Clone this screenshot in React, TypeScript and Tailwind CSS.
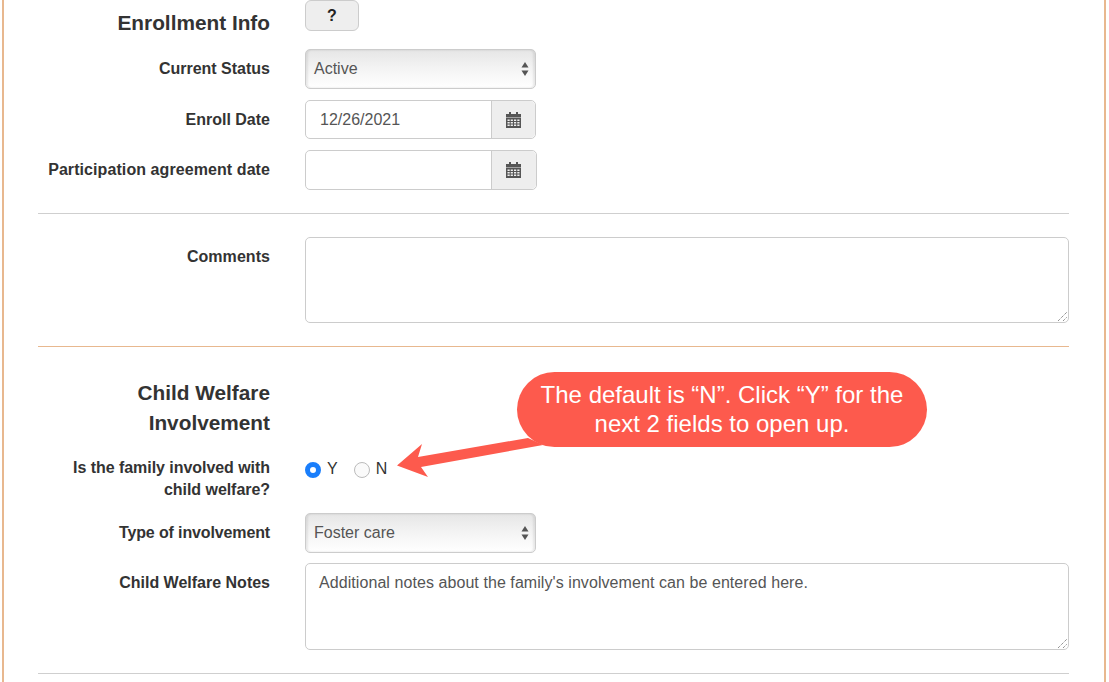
const labelClass = 'w-[232px] shrink-0 text-right text-[16px] leading-[23px] font-bold text-[#333]';

function CalendarIcon() {
  return (
    <svg className="mr-[1px]" width="15" height="16" viewBox="0 0 15 16" fill="#555">
      <rect x="3" y="0" width="2" height="3" />
      <rect x="10" y="0" width="2" height="3" />
      <path d="M0 2h15v3H0z" />
      <path fillRule="evenodd" d="M0 5.5h15V16H0z M1.5 7.5v1.5h2.2V7.5z M4.7 7.5v1.5h2.2V7.5z M8 7.5v1.5h2.2V7.5z M11.3 7.5v1.5h2.2V7.5z M1.5 10v1.5h2.2V10z M4.7 10v1.5h2.2V10z M8 10v1.5h2.2V10z M11.3 10v1.5h2.2V10z M1.5 12.5V14h2.2v-1.5z M4.7 12.5V14h2.2v-1.5z M8 12.5V14h2.2v-1.5z M11.3 12.5V14h2.2v-1.5z" />
    </svg>
  );
}

function FakeSelect({ value }: { value: string }) {
  return (
    <div className="flex h-[40px] w-[231px] items-center justify-between rounded-[5px] border border-[#ccc] bg-gradient-to-b from-[#e6e6e6] via-[#f4f4f4] to-[#fff] pr-[6px] pl-[8px] text-[16px] text-[#555] shadow-[inset_2px_0_2px_rgba(0,0,0,0.08),inset_-2px_0_2px_rgba(0,0,0,0.08)]">
      <span>{value}</span>
      <svg width="8" height="14" viewBox="0 0 8 14" fill="#555">
        <path d="M4 0l3.5 5.5h-7z" />
        <path d="M4 14L.5 8.5h7z" />
      </svg>
    </div>
  );
}

function DateInput({ value, wide }: { value?: string; wide?: boolean }) {
  return (
    <div className={`flex ${wide ? 'h-[40px] w-[232px]' : 'h-[39px] w-[231px]'} rounded-[5px] border border-[#ccc] text-[16px] text-[#555]`}>
      <div className="flex flex-1 items-center pl-[14px]">{value}</div>
      <div className={`flex ${wide ? 'w-[45px]' : 'w-[44px]'} items-center justify-center rounded-r-[5px] border-l border-[#ccc] bg-[#eee]`}>
        <CalendarIcon />
      </div>
    </div>
  );
}

function Notes({ value, height }: { value?: string; height: string }) {
  return (
    <div className={`relative w-[764px] ${height} rounded-[5px] border border-[#ccc] px-[13px] py-[7px] text-[16px] leading-[23px] tracking-[0.07px] text-[#555]`}>
      {value}
      <svg className="absolute right-[1px] bottom-[1px]" width="9" height="9" viewBox="0 0 9 9" stroke="#666" strokeWidth="1" strokeDasharray="1 1">
        <path d="M0 9L9 0M5 9l4-4" />
      </svg>
    </div>
  );
}

function Callout() {
  return (
    <div className="absolute top-[372px] left-[397px]">
      <svg className="absolute top-[60px] left-0" width="170" height="60" viewBox="0 0 170 60" fill="#fd5a4d">
        <path d="M0 33.5L25 12L21 25L131 6L146 13L24 35L31 45Z" />
      </svg>
      <div className="relative ml-[120px] flex h-[75px] w-[410px] items-center justify-center rounded-[38px] bg-[#fd5a4d] pb-[2px] text-center text-[24px] leading-[29px] text-white">
        <div>The default is “N”. Click “Y” for the<br />next 2 fields to open up.</div>
      </div>
    </div>
  );
}

export default function App() {
  return (
    <div className="relative h-[682px] w-[1109px] overflow-hidden bg-white font-['Liberation_Sans',Arial,sans-serif]">
      <div className="ml-[2px] h-[682px] w-[1104px] border-x-2 border-[#e8b88f] pl-[34px]">
        <div className="w-[1031px]">
          <div className="flex">
            <h2 className={`${labelClass} pt-[11px] !text-[20.8px] !leading-[24px]`}>Enrollment Info</h2>
            <div className="ml-[35px] flex h-[31px] w-[54px] items-center justify-center rounded-[6px] border border-[#ccc] bg-[#eee] text-[16px] font-bold text-[#222]">?</div>
          </div>

          <div className="mt-[14px] flex">
            <label className={`${labelClass} pt-[8px]`}>Current Status</label>
            <div className="ml-[35px]"><FakeSelect value="Active" /></div>
          </div>

          <div className="mt-[11px] flex">
            <label className={`${labelClass} pt-[8px]`}>Enroll Date</label>
            <div className="ml-[35px]"><DateInput value="12/26/2021" /></div>
          </div>

          <div className="mt-[11px] flex">
            <label className={`${labelClass} pt-[8px] tracking-[0.08px]`}>Participation agreement date</label>
            <div className="ml-[35px]"><DateInput wide /></div>
          </div>

          <hr className="mt-[23px] border-t border-[#cfcfcf]" />

          <div className="mt-[23px] flex">
            <label className={`${labelClass} pt-[8px] tracking-[0.05px]`}>Comments</label>
            <div className="ml-[35px]"><Notes height="h-[86px]" /></div>
          </div>

          <hr className="mt-[23px] border-t border-[#e8b88f]" />

          <h2 className={`${labelClass} mt-[31px] !text-[20.8px] !leading-[30px]`}>Child Welfare<br />Involvement</h2>

          <div className="mt-[19px] flex">
            <label className={`${labelClass} !leading-[22px] tracking-[-0.05px]`}>Is the family involved with child welfare?</label>
            <div className="ml-[35px] flex h-[23px] items-center text-[16px] text-[#333]">
              <span className="mt-[3px] h-[16px] w-[16px] rounded-full border-[5px] border-[#1a7efb] bg-white" />
              <span className="ml-[6px]">Y</span>
              <span className="mt-[3px] ml-[16px] h-[16px] w-[16px] rounded-full border border-[#bbb] bg-[#fafafa]" />
              <span className="ml-[6px]">N</span>
            </div>
          </div>

          <div className="mt-[12px] flex">
            <label className={`${labelClass} pt-[8px] tracking-[-0.13px]`}>Type of involvement</label>
            <div className="ml-[35px]"><FakeSelect value="Foster care" /></div>
          </div>

          <div className="mt-[10px] flex">
            <label className={`${labelClass} pt-[8px]`}>Child Welfare Notes</label>
            <div className="ml-[35px]"><Notes height="h-[87px]" value="Additional notes about the family's involvement can be entered here." /></div>
          </div>

          <hr className="mt-[23px] border-t border-[#cfcfcf]" />
        </div>
      </div>
      <Callout />
    </div>
  );
}
